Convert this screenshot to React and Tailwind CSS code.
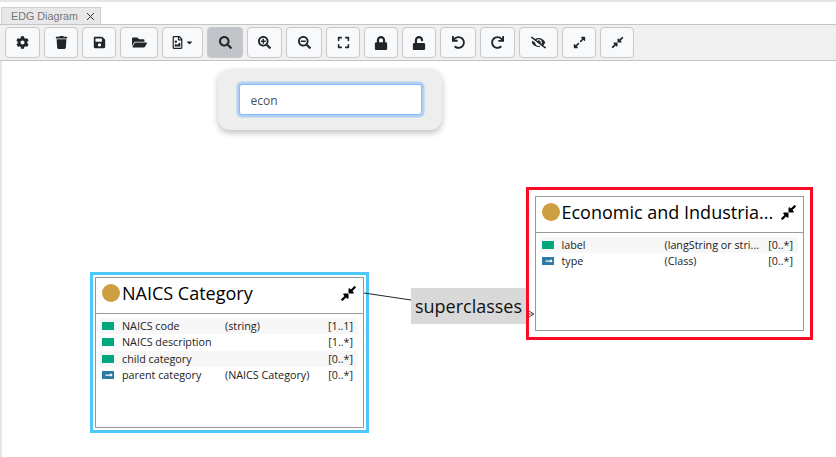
import {
  FaCog,
  FaTrash,
  FaSave,
  FaFolderOpen,
  FaRegFileImage,
  FaSearch,
  FaSearchPlus,
  FaSearchMinus,
  FaExpand,
  FaLock,
  FaUnlock,
  FaUndo,
  FaRedo,
  FaEyeSlash,
  FaExpandAlt,
  FaCompressAlt,
  FaCaretDown,
  FaLongArrowAltRight,
} from 'react-icons/fa'

const font = "font-['Open_Sans',sans-serif]"

function ToolButton({ width, active, children }) {
  return (
    <button
      className={`${width} h-[31px] flex items-center justify-center rounded-[4px] border border-[#c6c8ca] text-[#212529] text-[13px] ${
        active ? 'bg-[#c1c5c9]' : 'bg-[#f8f9fa]'
      }`}
    >
      {children}
    </button>
  )
}

function PropIcon({ kind }) {
  if (kind === 'arrow') {
    return (
      <span className="w-[12px] h-[8px] bg-[#2b7aa5] flex items-center justify-end pr-[1px] text-white text-[8px]">
        <FaLongArrowAltRight />
      </span>
    )
  }
  return <span className="w-[12px] h-[8px] bg-[#00a67c]" />
}

function PropRow({ kind, name, type, card, shaded }) {
  return (
    <div
      className={`flex items-center h-[16.33px] pl-[2px] pr-[5px] text-[10.75px] text-[#222] whitespace-nowrap ${
        shaded ? 'bg-[#f7f7f7]' : ''
      }`}
    >
      <PropIcon kind={kind} />
      <span className="ml-[8px] w-[103px]">{name}</span>
      <span className="flex-1">{type}</span>
      <span>{card}</span>
    </div>
  )
}

function Node({ className, title, children }) {
  return (
    <div className={`absolute border-[3px] ${className} ${font}`}>
      <div className="w-full h-full border border-[#999] bg-white flex flex-col">
        <div className="h-[36px] shrink-0 border-b border-[#999] flex items-center pl-[6px] pr-[6px] pb-[5px]">
          <span className="w-[18px] h-[18px] rounded-full bg-[#cd9f42] shrink-0" />
          <span className="ml-[2px] flex-1 text-[18px] text-black whitespace-nowrap">{title}</span>
          <FaCompressAlt className="text-[17px] text-black" />
        </div>
        <div className="pt-[4px] pl-[4px] pr-[5px]">{children}</div>
      </div>
    </div>
  )
}

export default function App() {
  return (
    <div className="w-[836px] h-[457px] relative overflow-hidden bg-white border-t-2 border-[#e6e6e6]">
      <div className="h-[22px] flex items-end pl-[1px]">
        <div className="h-[17px] w-[100px] flex items-center bg-[#e8e8e8] border border-b-0 border-[#d0d0d0] pl-[9px] font-['Liberation_Sans',sans-serif] text-[10.75px] text-[#777]">
          EDG Diagram
          <svg className="ml-[8px]" width="9" height="9" viewBox="0 0 9 9">
            <path d="M1 1 L8 8 M8 1 L1 8" stroke="#333" strokeWidth="1" fill="none" />
          </svg>
        </div>
      </div>

      <div className="h-[37px] flex items-center gap-[4px] pl-[5px] bg-[#f0f0f0] border-y border-[#c4c4c4]">
        <ToolButton width="w-[35px]"><FaCog /></ToolButton>
        <ToolButton width="w-[34px]"><FaTrash /></ToolButton>
        <ToolButton width="w-[34px]"><FaSave /></ToolButton>
        <ToolButton width="w-[38px]"><FaFolderOpen className="text-[15px]" /></ToolButton>
        <ToolButton width="w-[41px]">
          <FaRegFileImage />
          <FaCaretDown className="text-[9px] ml-[1px]" />
        </ToolButton>
        <ToolButton width="w-[36px]" active><FaSearch /></ToolButton>
        <ToolButton width="w-[35px]"><FaSearchPlus /></ToolButton>
        <ToolButton width="w-[36px]"><FaSearchMinus /></ToolButton>
        <ToolButton width="w-[34px]"><FaExpand /></ToolButton>
        <ToolButton width="w-[34px]"><FaLock className="text-[14px]" /></ToolButton>
        <ToolButton width="w-[34px]"><FaUnlock className="text-[14px]" /></ToolButton>
        <ToolButton width="w-[36px]"><FaUndo /></ToolButton>
        <ToolButton width="w-[35px]"><FaRedo /></ToolButton>
        <ToolButton width="w-[39px]"><FaEyeSlash className="text-[15px]" /></ToolButton>
        <ToolButton width="w-[34px]"><FaExpandAlt /></ToolButton>
        <ToolButton width="w-[34px]"><FaCompressAlt /></ToolButton>
      </div>

      <div className="absolute left-0 top-[59px] bottom-0 w-[2px] bg-[#e6e6e6]" />

      <div className="absolute left-[218px] top-[67px] w-[224px] h-[61px] rounded-[12px] bg-[#eeeeee] shadow-[0_3px_6px_rgba(0,0,0,0.25)] flex items-center justify-center">
        <input
          readOnly
          value="econ"
          className={`w-[183px] h-[31px] rounded-[3px] bg-white border border-[#80bdff] shadow-[0_0_0_2.5px_rgba(0,123,255,0.25)] pl-[11px] pt-[1px] text-[12px] text-[#495057] outline-none ${font}`}
        />
      </div>

      <div className={`absolute left-[411px] top-[286px] w-[115px] h-[36px] bg-[#d9d9d9] flex items-center justify-center text-[18px] text-[#111] ${font}`}>
        superclasses
      </div>

      <Node className="left-[90px] top-[270px] w-[279px] h-[161px] p-[2px] border-[#4cc8fb]" title="NAICS Category">
        <PropRow kind="attr" name="NAICS code" type="(string)" card="[1..1]" shaded />
        <PropRow kind="attr" name="NAICS description" type="" card="[1..*]" />
        <PropRow kind="attr" name="child category" type="" card="[0..*]" shaded />
        <PropRow kind="arrow" name="parent category" type="(NAICS Category)" card="[0..*]" />
      </Node>

      <Node className="left-[526px] top-[185px] w-[287px] h-[153px] pl-[5.5px] pr-[6px] py-[6px] border-[#fb0a25]" title="Economic and Industria...">
        <PropRow kind="attr" name="label" type="(langString or stri..." card="[0..*]" shaded />
        <PropRow kind="arrow" name="type" type="(Class)" card="[0..*]" />
      </Node>

      {/* edge sits on top of the node borders, broken by the label */}
      <svg className="absolute left-0 top-0" width="836" height="457">
        <path d="M364 291 L 411 298" stroke="#222" strokeWidth="1" fill="none" />
        <path d="M529 312 L 534 312 M529 309 L 534 312 L 529 315" stroke="#555" strokeWidth="1" fill="none" />
      </svg>
    </div>
  )
}
